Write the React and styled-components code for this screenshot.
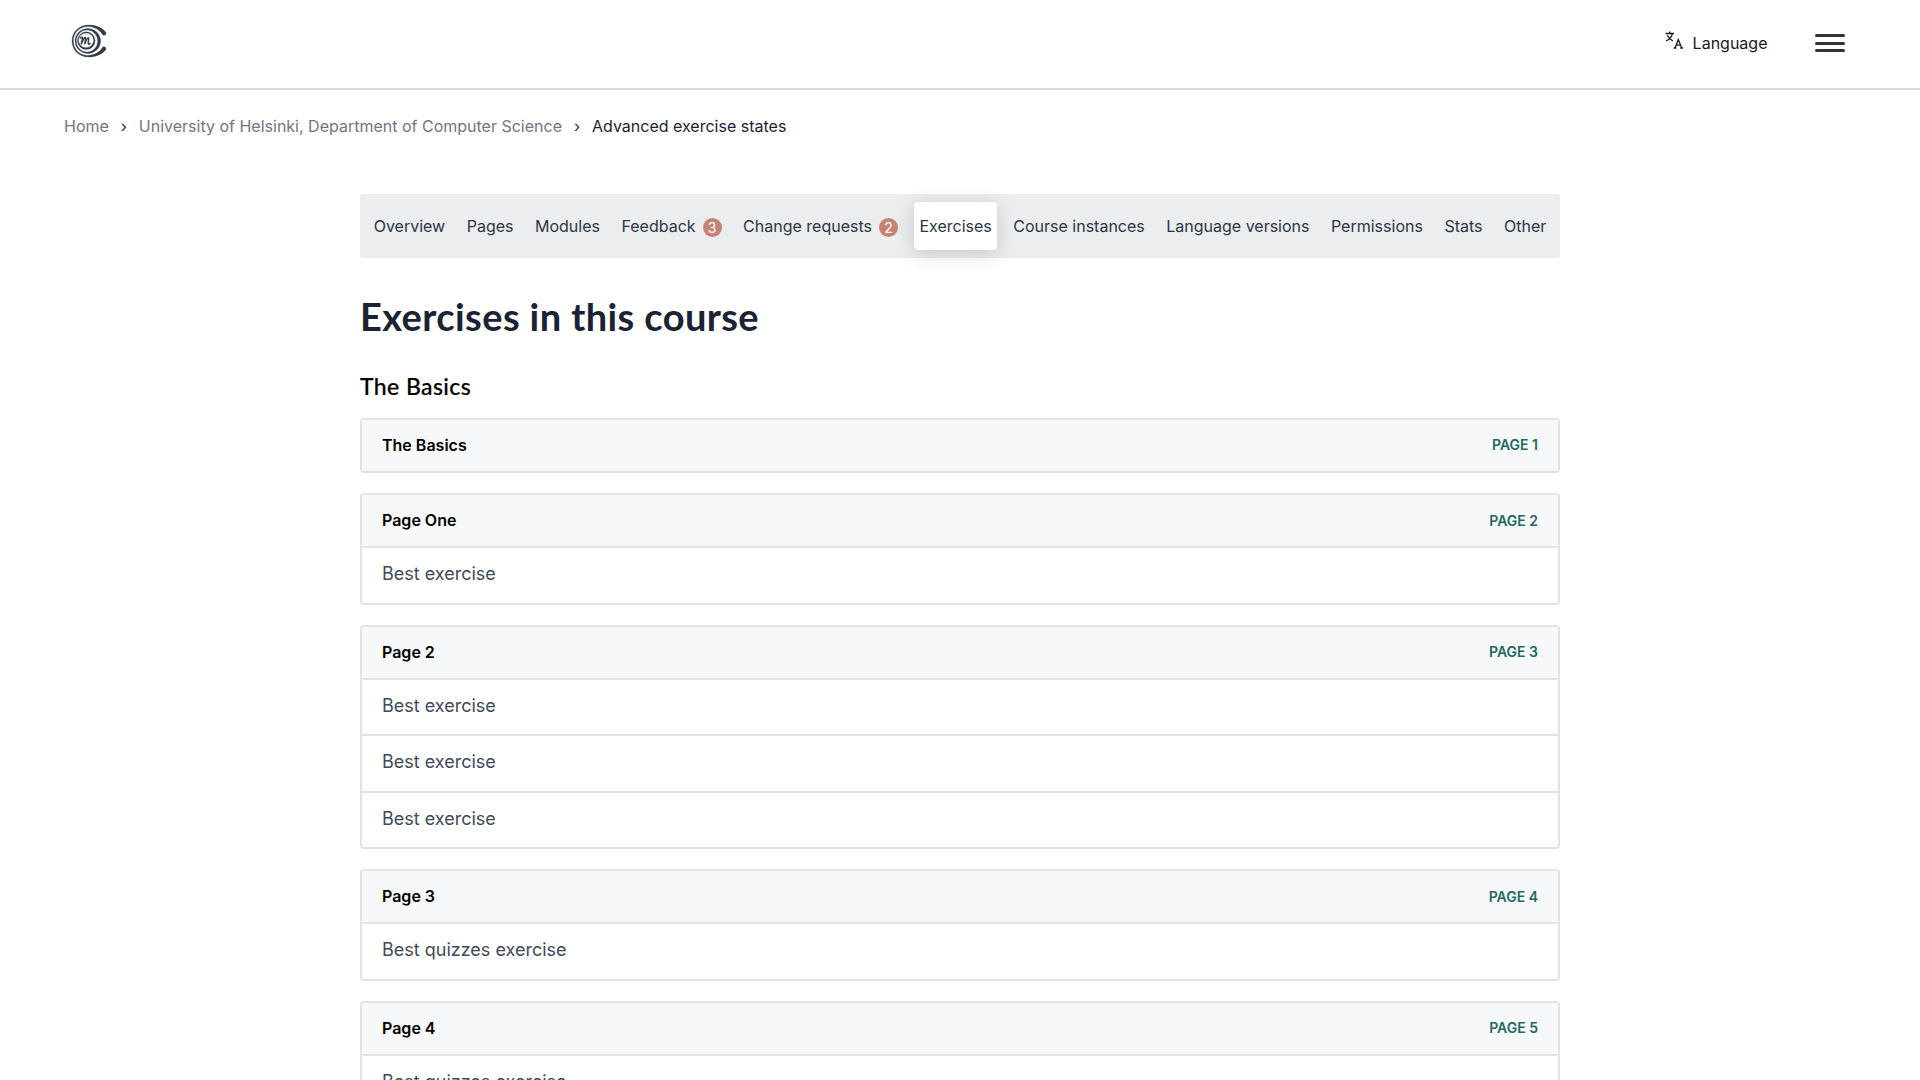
import React from "react";
import styled, { createGlobalStyle } from "styled-components";

const Global = createGlobalStyle`
  *, *::before, *::after { box-sizing: border-box; }
  html { overflow: hidden; }
  body {
    margin: 0;
    background: #fff;
    color: #000;
    font-family: Inter, "Liberation Sans", sans-serif;
    font-size: 16px;
  }
  h1, h2, ul, ol { margin: 0; padding: 0; }
  ul, ol { list-style: none; }
`;

const Page = styled.div`
  height: 1080px;
  overflow: hidden;
`;

const Header = styled.header`
  height: 90px;
  padding: 0 75px 0 71px;
  display: flex;
  align-items: flex-start;
  justify-content: space-between;
  border-bottom: 2px solid #dcdcdc;
`;

const Logo = styled.svg`
  width: 36px;
  height: 34px;
  margin-top: 24px;
  fill: #313b49;
  stroke: #313b49;
  stroke-width: 0.3;
`;

const HeaderTools = styled.div`
  height: 86px;
  display: flex;
  align-items: center;
`;

const LanguageButton = styled.button`
  display: flex;
  align-items: center;
  gap: 9.5px;
  padding: 0;
  margin-right: 47.5px;
  border: 0;
  background: none;
  color: #1a1a1a;
  font: inherit;
  line-height: 24px;

  svg { margin-top: -6px; }
`;

const MenuButton = styled.button`
  display: flex;
  flex-direction: column;
  gap: 4.5px;
  width: 30px;
  padding: 0;
  border: 0;
  background: none;
`;

const MenuBar = styled.span`
  height: 3px;
  border-radius: 2px;
  background: #333;
`;

const Breadcrumbs = styled.ol`
  height: 72px;
  padding: 0 64px;
  display: flex;
  align-items: center;
  gap: 11px;
`;

const Crumb = styled.li`
  color: ${(p) => (p.$current ? "#1a2333" : "#707684")};
`;

const Separator = styled.li`
  width: 8px;
  text-align: center;
  color: #333;
`;

const Main = styled.main`
  width: 1200px;
  margin: 32px auto 0;
`;

const Tabs = styled.nav`
  height: 64px;
  padding: 8px;
  display: flex;
  justify-content: space-between;
  border-radius: 3px;
  background: #ebedee;
`;

const Tab = styled.a`
  display: flex;
  align-items: center;
  gap: 7px;
  padding: 0 5.7px;
  border-radius: 4px;
  color: #2b3546;
  background: ${(p) => (p.$active ? "#fff" : "transparent")};
  box-shadow: ${(p) => (p.$active ? "0 4px 20px rgba(0, 0, 0, 0.16)" : "none")};
`;

const Badge = styled.span`
  width: 19px;
  height: 19px;
  margin-top: 2px;
  border-radius: 50%;
  background: #c78275;
  color: #fff;
  font-size: 14px;
  line-height: 19px;
  text-align: center;
`;

const Title = styled.h1`
  margin-top: 33px;
  color: #1a2333;
  font: 700 38px/50px Lato, "Open Sans", sans-serif;
  letter-spacing: 0.4px;
`;

const Chapter = styled.h2`
  margin: 31px 0 18px;
  font: 500 23px/28px Lato, "Open Sans", sans-serif;
  letter-spacing: 0.4px;
  -webkit-text-stroke: 0.2px #000;
`;

const Cards = styled.div`
  display: flex;
  flex-direction: column;
  gap: 20px;
`;

const Card = styled.section`
  border: 2px solid #e1e3e5;
  border-radius: 4px;
`;

const CardHead = styled.header`
  height: 51.2px;
  padding: 0 20px 1.4px;
  display: flex;
  align-items: center;
  justify-content: space-between;
  background: #f6f8fa;
`;

const CardTitle = styled.span`
  font-weight: 600;
`;

const PageNumber = styled.span`
  color: #1f6964;
  font-size: 14px;
  font-weight: 600;
`;

const Exercise = styled.li`
  height: 56.4px;
  padding: 12px 20px 0;
  border-top: 2px solid #e1e3e5;
  color: #414a5a;
  font-size: 18px;
  line-height: 27px;
`;

const crumbs = ["Home", "University of Helsinki, Department of Computer Science", "Advanced exercise states"];

const tabs = [
  { label: "Overview" },
  { label: "Pages" },
  { label: "Modules" },
  { label: "Feedback", count: 3 },
  { label: "Change requests", count: 2 },
  { label: "Exercises", active: true },
  { label: "Course instances" },
  { label: "Language versions" },
  { label: "Permissions" },
  { label: "Stats" },
  { label: "Other" },
];

const pages = [
  { title: "The Basics", exercises: [] },
  { title: "Page One", exercises: ["Best exercise"] },
  { title: "Page 2", exercises: ["Best exercise", "Best exercise", "Best exercise"] },
  { title: "Page 3", exercises: ["Best quizzes exercise"] },
  { title: "Page 4", exercises: ["Best quizzes exercise"] },
];

function MoocLogo() {
  return (
    <Logo viewBox="0 0 36 34">
      <path d="M35 8.500C30.500 2.600 23 1 17.500 1C8 1 1 8 1 17S8 33 17.500 33C23 33 30.500 31.400 35 25.500C35.200 23.500 34 22.200 32 22.800C28.500 28.800 22.500 31.400 16.500 31.400C8.500 31.400 2.300 25 2.300 17S8.500 2.600 16.500 2.600C22.500 2.600 28.500 5.200 32 11.200C34 11.800 35.200 10.500 35 8.500Z" />
      <path fillRule="evenodd" d="M4 17A12.800 12.500 0 1 1 29.600 17A12.800 12.500 0 1 1 4 17ZM5.300 17A10.700 11.100 0 1 0 26.700 17A10.700 11.100 0 1 0 5.300 17Z" />
      <path fillRule="evenodd" d="M6.500 16.700A8.800 8.900 0 1 1 24.100 16.700A8.800 8.900 0 1 1 6.500 16.700ZM7.500 16.300A7.600 7.400 0 1 0 22.700 16.300A7.600 7.400 0 1 0 7.500 16.300Z" />
      <path d="M9 14.500C10 13 11.500 12.800 11.500 14C11.500 16 10.200 18.500 10.200 20.300C11.500 17 13 13.300 14.300 13.300C15.500 13.800 13.700 17.500 13.700 20C14.800 17 16.300 13.600 17.500 13.800C18.400 14.600 16.500 18.500 17.300 20C18 20.600 18.700 20 19.300 18.800" fill="none" strokeWidth="1.400" />
    </Logo>
  );
}

function LanguageIcon() {
  return (
    <svg width="18" height="18" viewBox="0 0 18 18" fill="none" stroke="#1a1a1a" strokeWidth="1.300">
      <path d="M0.500 2.500H9M4.700 0.500V2.500M1 10C4.500 8.500 6.500 6 7.500 2.500M2.200 4.200C3.300 6.500 5 8.500 7.800 9.800" />
      <path d="M10 17L13.300 8.500L16.700 17M11 14.200H15.600M8.700 17H11.300M15.300 17H18" />
    </svg>
  );
}

export default function App() {
  return (
    <Page>
      <Global />
      <Header>
        <MoocLogo />
        <HeaderTools>
          <LanguageButton>
            <LanguageIcon />
            Language
          </LanguageButton>
          <MenuButton aria-label="Menu">
            <MenuBar />
            <MenuBar />
            <MenuBar />
          </MenuButton>
        </HeaderTools>
      </Header>
      <Breadcrumbs>
        {crumbs.map((c, i) => (
          <React.Fragment key={c}>
            {i > 0 && <Separator>›</Separator>}
            <Crumb $current={i === crumbs.length - 1}>{c}</Crumb>
          </React.Fragment>
        ))}
      </Breadcrumbs>
      <Main>
        <Tabs>
          {tabs.map((t) => (
            <Tab key={t.label} $active={t.active}>
              {t.label}
              {t.count && <Badge>{t.count}</Badge>}
            </Tab>
          ))}
        </Tabs>
        <Title>Exercises in this course</Title>
        <Chapter>The Basics</Chapter>
        <Cards>
          {pages.map((p, i) => (
            <Card key={p.title}>
              <CardHead>
                <CardTitle>{p.title}</CardTitle>
                <PageNumber>PAGE {i + 1}</PageNumber>
              </CardHead>
              <ul>
                {p.exercises.map((e, j) => (
                  <Exercise key={j}>{e}</Exercise>
                ))}
              </ul>
            </Card>
          ))}
        </Cards>
      </Main>
    </Page>
  );
}
